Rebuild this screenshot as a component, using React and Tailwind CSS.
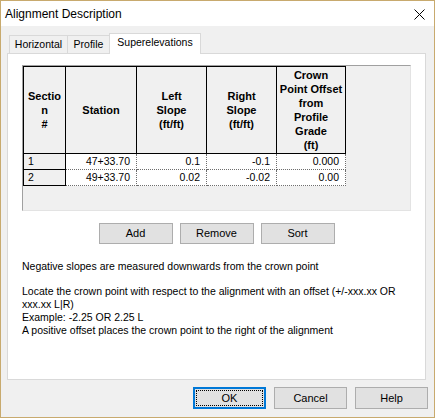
import React from 'react';

const cols = [
  { w: 'w-[42px]', label: ['Sectio', 'n', '#'] },
  { w: 'w-[71px]', label: ['Station'] },
  { w: 'w-[70px]', label: ['Left', 'Slope', '(ft/ft)'] },
  { w: 'w-[70px]', label: ['Right', 'Slope', '(ft/ft)'] },
  { w: 'w-[69px]', label: ['Crown', 'Point Offset', 'from', 'Profile', 'Grade', '(ft)'] },
];

const rows = [
  ['1', '47+33.70', '0.1', '-0.1', '0.000'],
  ['2', '49+33.70', '0.02', '-0.02', '0.00'],
];

const Button = ({ children, className = '' }) => (
  <button className={`bg-[#e1e1e1] border border-[#adadad] text-black text-[11px] flex items-center justify-center ${className}`}>
    {children}
  </button>
);

const App = () => {
  return (
    <div className="w-[435px] h-[418px] border border-[#c8aa6e] bg-[#f0f0f0] flex flex-col font-['Liberation_Sans',Arial,sans-serif] text-black select-none">
      {/* title bar */}
      <div className="h-[25px] bg-white flex items-center justify-between pl-[4px] pr-[9px] shrink-0">
        <span className="text-[12px] leading-none pt-[1px]">Alignment Description</span>
        <svg width="11" height="11" viewBox="0 0 11 11" className="mt-[1px]">
          <path d="M0.5 0.5L10.5 10.5M10.5 0.5L0.5 10.5" stroke="#000" strokeWidth="1" />
        </svg>
      </div>

      {/* tabs */}
      <div className="pl-[6px] pt-[7px]">
        <div className="flex items-end h-[20px]">
          <div className="ml-[2px] w-[59px] h-[18px] border border-b-0 border-[#d9d9d9] bg-[#f0f0f0] flex items-center justify-center text-[10.5px]">
            Horizontal
          </div>
          <div className="w-[41px] h-[18px] border-t border-[#d9d9d9] bg-[#f0f0f0] flex items-center justify-center text-[10.5px]">
            Profile
          </div>
          <div className="relative z-10 -mb-px w-[92px] h-[21px] border border-b-0 border-[#d9d9d9] bg-white flex items-center justify-center text-[10.5px] pb-[2px]">
            Superelevations
          </div>
        </div>

        {/* tab panel */}
        <div className="w-[419px] h-[327px] border border-[#d9d9d9] bg-white pt-[11px] pl-[14px]">
          {/* data grid */}
          <div className="w-[389px] h-[146px] bg-[#f0f0f0] border-l border-t border-[#a0a0a0] border-r-[#e3e3e3] border-b-[#e3e3e3] border-r border-b">
            <div className="flex w-fit border-l border-t border-black">
              {cols.map((c, i) => (
                <div key={i} className={`${c.w} h-[87px] border-r border-b border-black flex flex-col items-center justify-center text-[11px] font-bold leading-[14px] text-center`}>
                  {c.label.map((l, j) => (
                    <span key={j} className="whitespace-nowrap">{l}</span>
                  ))}
                </div>
              ))}
            </div>
            {rows.map((r, ri) => (
              <div key={ri} className="flex w-fit border-l border-black">
                {r.map((v, ci) =>
                  ci === 0 ? (
                    <div key={ci} className={`${cols[ci].w} h-[16px] border-r border-b border-black flex items-center pl-[4px] text-[10.5px]`}>
                      {v}
                    </div>
                  ) : (
                    <div key={ci} className={`${cols[ci].w} h-[16px] border-r border-b border-dotted border-[#6d6d6d] bg-white flex items-center justify-end pr-[6px] text-[10.5px]`}>
                      {v}
                    </div>
                  )
                )}
              </div>
            ))}
          </div>

          <div className="flex justify-center gap-[7px] mt-[12px] pr-[14px]">
            <Button className="w-[74px] h-[21px]">Add</Button>
            <Button className="w-[74px] h-[21px]">Remove</Button>
            <Button className="w-[74px] h-[21px]">Sort</Button>
          </div>

          <div className="mt-[16px] text-[10.5px] leading-[13px] whitespace-nowrap">
            <p>Negative slopes are measured downwards from the crown point</p>
            <p className="mt-[12px]">Locate the crown point with respect to the alignment with an offset (+/-xxx.xx OR</p>
            <p>xxx.xx L|R)</p>
            <p>Example: -2.25 OR 2.25 L</p>
            <p>A positive offset places the crown point to the right of the alignment</p>
          </div>
        </div>
      </div>

      {/* footer */}
      <div className="flex justify-end gap-[8px] pt-[7px] pr-[6px]">
        <button className="w-[73px] h-[22px] bg-[#e1e1e1] border-2 border-[#0078d7] p-[1px] flex">
          <span className="flex-1 border border-dotted border-black flex items-center justify-center text-[11px]">OK</span>
        </button>
        <Button className="w-[73px] h-[22px]">Cancel</Button>
        <Button className="w-[73px] h-[22px]">Help</Button>
      </div>
    </div>
  );
};

export default App;
